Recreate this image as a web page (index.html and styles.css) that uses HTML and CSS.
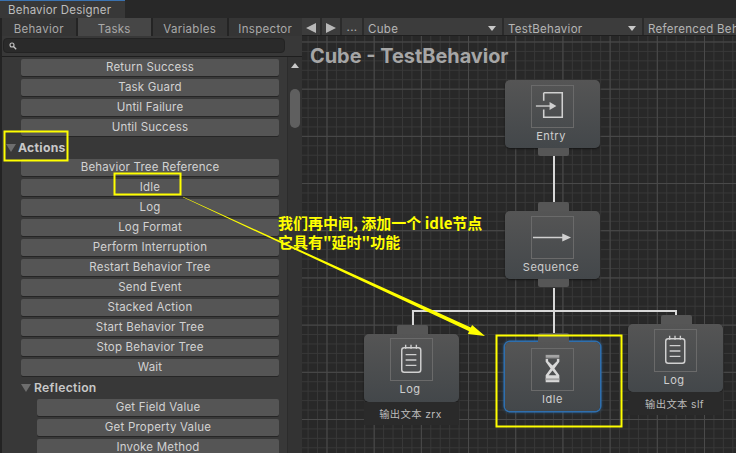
FILE: index.html
```html
<!DOCTYPE html>
<html lang="en">
<head>
<meta charset="utf-8">
<title>Behavior Designer</title>
<link rel="stylesheet" href="styles.css">
</head>
<body>
<div class="app">
  <header class="titlebar"><div class="window-tab">Behavior Designer</div></header>
  <div class="main">
    <aside class="side">
      <nav class="tabs">
        <span class="tab">Behavior</span>
        <span class="tab active">Tasks</span>
        <span class="tab">Variables</span>
        <span class="tab">Inspector</span>
      </nav>
      <div class="search-row">
        <div class="search">
          <svg class="search-icon" viewBox="0 0 8 8"><circle cx="3" cy="3" r="2" fill="none" stroke="#c4c4c4" stroke-width="1.1"/><path d="M4.5 4.5L7.2 7.2" stroke="#c4c4c4" stroke-width="1.3"/></svg>
        </div>
      </div>
      <div class="list-area">
        <div class="list">
          <div class="btn">Return Success</div>
          <div class="btn">Task Guard</div>
          <div class="btn">Until Failure</div>
          <div class="btn">Until Success</div>
          <div class="group"><i class="tri"></i>Actions</div>
          <div class="btn">Behavior Tree Reference</div>
          <div class="btn">Idle</div>
          <div class="btn">Log</div>
          <div class="btn">Log Format</div>
          <div class="btn">Perform Interruption</div>
          <div class="btn">Restart Behavior Tree</div>
          <div class="btn">Send Event</div>
          <div class="btn">Stacked Action</div>
          <div class="btn">Start Behavior Tree</div>
          <div class="btn">Stop Behavior Tree</div>
          <div class="btn">Wait</div>
          <div class="group sub"><i class="tri"></i>Reflection</div>
          <div class="btn nested">Get Field Value</div>
          <div class="btn nested">Get Property Value</div>
          <div class="btn nested">Invoke Method</div>
        </div>
        <div class="scrollbar"><i class="up"></i><i class="thumb"></i></div>
      </div>
    </aside>
    <section class="editor">
      <div class="toolbar">
        <span class="tb-btn"><i class="arrow-l"></i></span>
        <span class="tb-btn"><i class="arrow-r"></i></span>
        <span class="tb-btn dots">...</span>
        <span class="tb-drop">Cube<i class="caret"></i></span>
        <span class="tb-drop">TestBehavior<i class="caret"></i></span>
        <span class="tb-ref">Referenced Behaviors</span>
      </div>
      <div class="canvas">
        <h1 class="graph-title">Cube - TestBehavior</h1>
      </div>
    </section>
  </div>

  <div class="wire v w1"></div>
  <div class="wire v w2"></div>
  <div class="wire h w3"></div>
  <div class="wire v w4"></div>
  <div class="wire v w5"></div>

  <div class="node n-entry">
    <div class="icon"><svg viewBox="0 0 42 42"><path d="M12 7H31V32H12V24M12 15V7" fill="none" stroke="#d0d0d0" stroke-width="1.6"/><path d="M4 20.500H22" stroke="#d0d0d0" stroke-width="1.400"/><path d="M18 16.500L25 20.500L18 24.500Z" fill="#d0d0d0"/></svg></div>
    <div class="name">Entry</div>
    <i class="port bottom"></i>
  </div>
  <div class="node n-seq">
    <i class="port top"></i>
    <div class="icon"><svg viewBox="0 0 42 42"><path d="M1 21H34" stroke="#d0d0d0" stroke-width="1.6"/><path d="M31 17L40 21L31 25Z" fill="#d0d0d0"/></svg></div>
    <div class="name">Sequence</div>
    <i class="port bottom"></i>
  </div>
  <div class="node n-log1">
    <i class="port top"></i>
    <div class="icon"><svg viewBox="0 0 42 42"><use href="#note"/></svg></div>
    <div class="name">Log</div>
  </div>
  <div class="caption c1">输出文本 zrx</div>
  <div class="node n-idle">
    <i class="port top"></i>
    <div class="icon"><svg viewBox="0 0 42 42"><path d="M14 6H28V9H14Z" fill="#a4a4a4"/><path d="M14 10H28V13L23 20L28 27V34H14V27L19 20L14 13Z" fill="#d8d8d8"/><path d="M16.500 10H25.500V12.500L21 17L16.500 12.500Z" fill="#4d4f50"/><path d="M21 22L25 27H17Z" fill="#4d4f50"/><path d="M14 30H28V32H14Z" fill="#a4a4a4"/></svg></div>
    <div class="name">Idle</div>
  </div>
  <div class="node n-log2">
    <i class="port top"></i>
    <div class="icon"><svg viewBox="0 0 42 42"><use href="#note"/></svg></div>
    <div class="name">Log</div>
  </div>
  <div class="caption c2">输出文本 slf</div>

  <svg class="defs" width="0" height="0"><defs><g id="note"><rect x="11" y="9" width="19.500" height="25" rx="2.500" fill="none" stroke="#d0d0d0" stroke-width="1.500"/><path d="M15 6V10M20.500 6V10M26 6V10" stroke="#d0d0d0" stroke-width="1.400"/><path d="M15 16H26M15 21.500H26M15 27H26" stroke="#d0d0d0" stroke-width="1.500"/></g></defs></svg>

  <svg class="overlay" width="736" height="453" viewBox="0 0 736 453">
    <polygon points="183,196.700 470.800,327.600 472.100,324.900 485,336 467.900,333.900 469.200,331.200 183,197.300" fill="#ffff00"/>
    <rect x="4.500" y="131.500" width="63" height="29" class="mark"/>
    <rect x="114.500" y="173.500" width="66" height="21" class="mark"/>
    <rect x="496.500" y="335.500" width="125" height="91" class="mark"/>
  </svg>
  <div class="note">我们再中间, 添加一个 idle节点<br>它具有"延时"功能</div>
</div>
</body>
</html>
```
FILE: styles.css
```css
* { box-sizing: border-box; }
html, body { margin: 0; padding: 0; }
body { width: 736px; height: 453px; overflow: hidden; background: #282828; font-family: Inter, "Noto Sans CJK SC", sans-serif; color: #c4c4c4; font-size: 11px; }
.app { position: relative; width: 736px; height: 453px; overflow: hidden; }

.titlebar { height: 18px; background: #282828; }
.window-tab { width: 125px; height: 18px; background: #383838; border-top: 1px solid #3a72b0; padding-left: 8px; line-height: 18px; font-size: 11.5px; letter-spacing: .2px; color: #bdbdbd; }

.main { display: flex; height: 435px; }
.side { width: 302px; flex: none; background: #383838; border-left: 2px solid #232323; display: flex; flex-direction: column; }
.tabs { display: flex; height: 18px; background: #333; }
.tab { flex: 1; text-align: center; line-height: 22px; font-size: 11.5px; letter-spacing: .3px; color: #a9a9a9; background: #353535; border-right: 2px solid #242424; }
.tab.active { background: #464646; }
.tab:last-child { border-right: 0; }

.search-row { height: 21px; padding: 2px 17px 0 1px; border-bottom: 1px solid #1e1e1e; }
.search { height: 15px; background: #2a2a2a; border-radius: 4px; border: 1px solid #232323; padding: 3px 0 0 5px; display: flex; }
.search-icon { width: 8px; height: 8px; }

.list-area { flex: 1; display: flex; min-height: 0; }
.list { flex: 1; min-width: 0; padding: 2px 0 0 19px; }
.btn { height: 17px; margin: 0 8px 3px 0; background: #555; border-radius: 2px; box-shadow: 0 1px 0 #262626; text-align: center; line-height: 16px; font-size: 11.5px; letter-spacing: .2px; color: #d2d2d2; }
.btn.nested { margin-left: 16px; }
.group { height: 20px; padding-bottom: 4px; margin: 0 0 0 -15px; display: flex; align-items: center; gap: 2px; font-weight: 700; font-size: 12.2px; letter-spacing: .3px; color: #c8c8c8; }
.group.sub { margin: 0; gap: 3px; font-weight: 600; }
.tri { width: 0; height: 0; border-left: 5px solid transparent; border-right: 5px solid transparent; border-top: 8px solid #6e6e6e; margin-top: 2px; }

.scrollbar { width: 15px; background: #333; border-left: 1px solid #2c2c2c; padding-top: 6px; display: flex; flex-direction: column; align-items: center; flex: none; }
.up { width: 0; height: 0; border-left: 4px solid transparent; border-right: 4px solid transparent; border-bottom: 5px solid #c8c8c8; }
.thumb { width: 10px; height: 39px; margin-top: 21px; background: #5f5f5f; border-radius: 5px; }

.editor { flex: 1; min-width: 0; display: flex; flex-direction: column; }
.toolbar { height: 18px; display: flex; background: #383838; border-bottom: 1px solid #1f1f1f; font-size: 11.5px; letter-spacing: .3px; color: #b5b5b5; white-space: nowrap; overflow: hidden; }
.tb-btn { width: 20px; flex: none; display: flex; align-items: center; justify-content: center; border-right: 2px solid #2b2b2b; background: #3c3c3c; padding-top: 2px; }
.tb-btn.dots { width: 22px; align-items: flex-start; line-height: 19px; padding-top: 0; }
.arrow-l { width: 0; height: 0; border-top: 5px solid transparent; border-bottom: 5px solid transparent; border-right: 10px solid #b8b8b8; }
.arrow-r { width: 0; height: 0; border-top: 5px solid transparent; border-bottom: 5px solid transparent; border-left: 10px solid #b8b8b8; }
.tb-drop { width: 140px; flex: none; padding-left: 4px; line-height: 22px; position: relative; border-right: 2px solid #2b2b2b; background: #3c3c3c; }
.caret { position: absolute; right: 6px; top: 8px; width: 0; height: 0; border-left: 4px solid transparent; border-right: 4px solid transparent; border-top: 5px solid #c8c8c8; }
.tb-ref { padding-left: 4px; line-height: 22px; background: #3c3c3c; flex: 1; }

.canvas { flex: 1; background-color: #282828;
  background-image:
    linear-gradient(#4a4a4a 1px, transparent 1px),
    linear-gradient(90deg, #4a4a4a 1px, transparent 1px),
    linear-gradient(#383838 1px, transparent 1px),
    linear-gradient(90deg, #383838 1px, transparent 1px);
  background-size: 47.2px 47.2px, 47.2px 47.2px, 9.44px 9.44px, 9.44px 9.44px;
  background-position: 0 5.5px, 24.5px 0, 0 5.5px, 24.5px 0;
}
.graph-title { margin: 0; padding: 8px 0 0 8px; font-size: 19.9px; line-height: 24px; font-weight: 700; color: #a6a6a6; }

.wire { position: absolute; background: #d8d8d8; }
.wire.v { width: 2px; }
.wire.h { height: 2px; }
.w1 { left: 553px; top: 156px; height: 55px; }
.w2 { left: 553px; top: 288px; height: 47px; }
.w3 { left: 412px; top: 310px; width: 265px; }
.w4 { left: 412px; top: 310px; height: 16px; }
.w5 { left: 675px; top: 310px; height: 6px; }

.node { position: absolute; width: 95px; height: 68px; border-radius: 5px; background: linear-gradient(#555, #43474a); box-shadow: 0 1px 2px #151515; display: flex; flex-direction: column; align-items: center; padding-top: 5px; }
.icon { width: 43px; height: 43px; border: 1px solid #6a6a6a; flex: none; }
.icon svg { display: block; width: 41px; height: 41px; }
.name { margin-top: 1px; padding-right: 3px; line-height: 15px; font-size: 11px; letter-spacing: .5px; color: #cfcfcf; }
.port { position: absolute; left: 33px; width: 31px; height: 9px; background: #565656; }
.port.top { top: -9px; border-radius: 2px 2px 0 0; }
.port.bottom { bottom: -8px; height: 8px; border-radius: 0 0 2px 2px; }

.n-entry { left: 505px; top: 80px; }
.n-seq { left: 505px; top: 211px; }
.n-log1 { left: 364px; top: 334px; padding-top: 4px; }
.n-idle { left: 505px; top: 342px; height: 69px; padding-top: 6px; box-shadow: 0 0 0 1.5px #2f6fae, 0 0 3px 2px rgba(47,111,174,.45); }
.n-idle .name { padding-right: 0; }
.n-log2 { left: 628px; top: 324px; }

.caption { position: absolute; width: 95px; height: 23px; background: #2a2a2a; padding-right: 2px; text-align: center; line-height: 24px; font-size: 10.3px; letter-spacing: .4px; color: #bcbcbc; }
.c1 { left: 364px; top: 402px; }
.c2 { left: 628px; top: 392px; }

.defs { position: absolute; }
.overlay { position: absolute; left: 0; top: 0; pointer-events: none; }
.mark { fill: none; stroke: #ffff00; stroke-width: 2; }
.note { position: absolute; left: 278px; top: 213px; font-family: "Noto Sans CJK SC", sans-serif; font-weight: 700; font-size: 15px; line-height: 19px; color: #ffff00; white-space: nowrap; }
```
